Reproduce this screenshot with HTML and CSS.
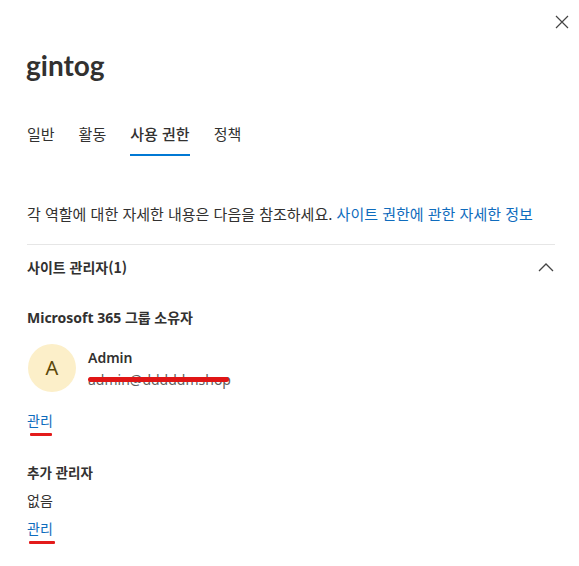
FILE: index.html
```html
<!DOCTYPE html>
<html lang="ko">
<head>
<meta charset="utf-8">
<title>gintog</title>
<link rel="stylesheet" href="styles.css">
</head>
<body>
<div class="panel">
  <button class="close" aria-label="닫기">
    <svg width="14" height="14" viewBox="0 0 14 14"><path d="M1 1L13 13M13 1L1 13" stroke="#444" stroke-width="1.2" fill="none"/></svg>
  </button>
  <h1 class="title">gintog</h1>
  <nav class="tabs">
    <span class="tab">일반</span>
    <span class="tab">활동</span>
    <span class="tab active">사용 권한</span>
    <span class="tab">정책</span>
  </nav>
  <p class="desc">각 역할에 대한 자세한 내용은 다음을 참조하세요. <a class="link" href="#">사이트 권한에 관한 자세한 정보</a></p>
  <div class="divider"></div>
  <div class="section-head">
    <span class="section-title">사이트 관리자(1)</span>
    <svg width="16" height="10" viewBox="0 0 16 10"><path d="M1 9L8 2L15 9" stroke="#444" stroke-width="1.3" fill="none"/></svg>
  </div>
  <div class="subhead">Microsoft 365 그룹 소유자</div>
  <div class="person">
    <div class="avatar">A</div>
    <div class="person-text">
      <div class="name">Admin</div>
      <div class="email"><span class="redact">admin@dddddmshop</span></div>
    </div>
  </div>
  <div class="manage-wrap">
    <a class="manage" href="#">관리</a>
    <span class="mark"></span>
  </div>
  <div class="subhead extra">추가 관리자</div>
  <div class="none">없음</div>
  <div class="manage-wrap second">
    <a class="manage" href="#">관리</a>
    <span class="mark"></span>
  </div>
</div>
</body>
</html>
```
FILE: styles.css
```css
html, body {
  margin: 0;
  padding: 0;
  background: #ffffff;
}
body {
  font-family: "Noto Sans", "Noto Sans CJK KR", sans-serif;
  color: #323130;
  font-size: 14px;
  line-height: 20px;
}
.panel {
  position: relative;
  padding: 47px 24px 20px 27px;
  display: flex;
  flex-direction: column;
  align-items: flex-start;
}
.close {
  position: absolute;
  top: 14px;
  right: 9px;
  width: 16px;
  height: 16px;
  padding: 0;
  border: 0;
  background: none;
  display: flex;
  align-items: center;
  justify-content: center;
}
.title {
  margin: 0 0 0 -1px;
  font-family: "Lato", "Noto Sans", sans-serif;
  font-size: 28px;
  line-height: 36px;
  font-weight: 700;
  color: #323130;
}
.tabs {
  margin-top: 41px;
  display: flex;
  gap: 24px;
}
.tab {
  padding-bottom: 10px;
  border-bottom: 2px solid transparent;
  font-family: "Noto Sans CJK KR", sans-serif;
  font-size: 15px;
  color: #323130;
}
.tab.active {
  border-bottom-color: #0078d4;
  font-weight: 500;
}
.desc {
  margin: 48px 0 0;
  font-family: "Noto Sans CJK KR", sans-serif;
  font-size: 15px;
}
.link {
  color: #0f6cbd;
  text-decoration: none;
}
.divider {
  align-self: stretch;
  margin-top: 20px;
  height: 1px;
  background: #e6e6e6;
}
.section-head {
  align-self: stretch;
  height: 44px;
  display: flex;
  align-items: center;
  justify-content: space-between;
  padding-right: 1px;
}
.section-title {
  font-weight: 700;
  font-family: "Noto Sans CJK KR", sans-serif;
}
.subhead {
  margin-top: 19px;
  font-weight: 700;
  font-family: "Noto Sans", "Noto Sans CJK KR", sans-serif;
}
.subhead.extra {
  margin-top: 26px;
  font-family: "Noto Sans CJK KR", sans-serif;
  font-size: 13.5px;
}
.person {
  margin-top: 16px;
  display: flex;
  align-items: flex-start;
  gap: 12px;
  padding-left: 1px;
}
.avatar {
  width: 48px;
  height: 48px;
  border-radius: 50%;
  background: #fcefc9;
  color: #5b4708;
  display: flex;
  align-items: center;
  justify-content: center;
  font-size: 20px;
}
.person-text {
  margin-top: 4px;
  display: flex;
  flex-direction: column;
  gap: 2px;
}
.name {
  font-weight: 600;
}
.email {
  color: #605e5c;
}
.redact {
  position: relative;
}
.redact::after {
  content: "";
  position: absolute;
  left: 0;
  width: 141px;
  top: 7px;
  height: 5px;
  border-radius: 3px;
  background: #e01616;
}
.manage-wrap {
  margin-top: 18px;
  display: flex;
  flex-direction: column;
  align-items: flex-start;
}
.manage {
  color: #0f6cbd;
  text-decoration: none;
  font-family: "Noto Sans CJK KR", sans-serif;
}
.mark {
  margin: 3px 0 0 3px;
  width: 22px;
  height: 3px;
  border-radius: 1px;
  background: #e31b1b;
}
.manage-wrap.second {
  margin-top: 8px;
}
.manage-wrap.second .mark {
  margin-left: 2px;
  width: 26px;
}
.none {
  margin-top: 8px;
  font-family: "Noto Sans CJK KR", sans-serif;
}
```
